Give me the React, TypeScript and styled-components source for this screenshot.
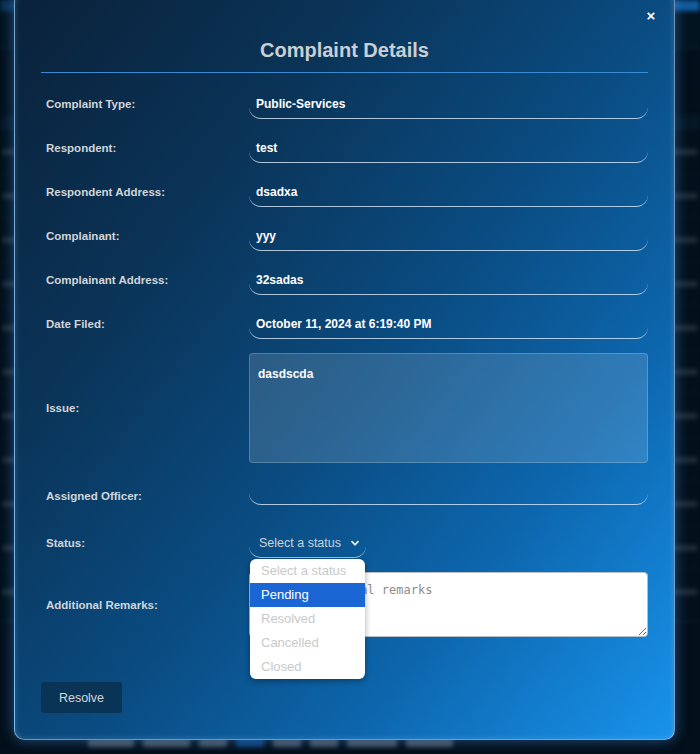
import React from "react";
import styled, { createGlobalStyle } from "styled-components";

const GlobalStyle = createGlobalStyle`
  html, body { margin: 0; padding: 0; background: #030f1a; overflow: hidden; }
  * { box-sizing: border-box; }
`;

const Page = styled.div`
  position: relative;
  width: 700px;
  height: 754px;
  overflow: hidden;
  background: #04121e;
  font-family: "Liberation Sans", Arial, sans-serif;
`;

/* ---------- blurred application behind the modal ---------- */
const AppBehind = styled.div`
  height: 100%;
  display: flex;
  flex-direction: column;
  filter: blur(2px);
`;

const TopBar = styled.div`
  height: 11px;
  background: linear-gradient(90deg, #0c3f69 0%, #1478cc 100%);
`;

const HeaderZone = styled.div`
  height: 38px;
  background: #051827;
  border-bottom: 1px solid #12293d;
`;

const TableArea = styled.div`
  margin-top: 66px;
  display: flex;
  flex-direction: column;
  background: #04131e;
  border-top: 14px solid #071c2c;
  border-bottom: 1px solid #1a2f42;
  padding-bottom: 8px;
`;

const TableRow = styled.div`
  height: 44px;
  display: flex;
  align-items: center;
  justify-content: space-between;
  padding: 0 2px;
  border-top: 1px solid #0a1d2c;
`;

const Ghost = styled.span<{ $w: number }>`
  display: block;
  width: ${(p) => p.$w}px;
  height: 6px;
  border-radius: 3px;
  background: #2b3946;
`;

const Pager = styled.div`
  margin-top: auto;
  height: 16px;
  display: flex;
  gap: 9px;
  padding-left: 88px;
  align-items: flex-start;
`;

const PagerPill = styled.span<{ $w: number; $active?: boolean }>`
  display: block;
  width: ${(p) => p.$w}px;
  height: 9px;
  border-radius: 2px;
  background: ${(p) => (p.$active ? "#0f4f94" : "#5b6670")};
`;

/* ---------- modal ---------- */
const Overlay = styled.div`
  position: absolute;
  inset: 0;
  background: rgba(0, 6, 14, 0.25);
`;

const Modal = styled.div`
  position: absolute;
  left: 14px;
  top: -8px;
  width: 661px;
  height: 748px;
  border-radius: 10px;
  border: 1.5px solid rgba(190, 220, 255, 0.6);
  box-shadow: 0 0 14px rgba(70, 150, 240, 0.5), inset 0 0 6px rgba(160, 210, 255, 0.25);
  background: linear-gradient(
    128deg,
    #0a2139 0%,
    #0a3458 28%,
    #0a4b80 52%,
    #0d66ad 74%,
    #1893ec 100%
  );
  padding: 0 26px 0 26px;
  display: flex;
  flex-direction: column;
`;

const CloseButton = styled.button`
  position: absolute;
  top: 14px;
  right: 14px;
  width: 18px;
  height: 18px;
  padding: 0;
  border: none;
  background: transparent;
  color: #ffffff;
  font-family: "Liberation Sans", Arial, sans-serif;
  font-weight: 700;
  font-size: 15px;
  line-height: 18px;
  cursor: pointer;
`;

const Title = styled.h2`
  margin: 0;
  padding: 45px 0 10px;
  text-align: center;
  font-size: 20px;
  line-height: 24px;
  font-weight: 700;
  color: #cbcfd3;
  border-bottom: 1px solid #3b8bd3;
`;

const Form = styled.div`
  margin-top: 16px;
  display: flex;
  flex-direction: column;
  gap: 14px;
`;

const Row = styled.div<{ $extra?: number; $alignEnd?: boolean }>`
  display: grid;
  grid-template-columns: 208px 1fr;
  align-items: ${(p) => (p.$alignEnd ? "end" : "center")};
  margin-top: ${(p) => p.$extra ?? 0}px;
`;

const Label = styled.label<{ $lift?: number }>`
  padding-left: 5px;
  padding-bottom: ${(p) => p.$lift ?? 0}px;
  font-size: 11.5px;
  line-height: 14px;
  font-weight: 700;
  color: #d2d5d9;
`;

const LineInput = styled.div<{ $h?: number }>`
  height: ${(p) => p.$h ?? 30}px;
  display: flex;
  align-items: center;
  padding: 0 7px;
  border: none;
  border-bottom: 1px solid rgba(215, 232, 250, 0.8);
  border-radius: 12px;
  color: #ffffff;
  font-size: 12px;
  font-weight: 700;
`;

const IssueBox = styled.div`
  height: 110px;
  padding: 13px 8px;
  background: rgba(255, 255, 255, 0.14);
  border: 1px solid rgba(255, 255, 255, 0.2);
  border-radius: 4px;
  color: #ffffff;
  font-size: 12px;
  line-height: 14px;
  font-weight: 700;
`;

const SelectWrap = styled.div`
  position: relative;
  width: 117px;
`;

const SelectBox = styled.div`
  height: 30px;
  display: flex;
  align-items: center;
  justify-content: space-between;
  padding: 0 5px 0 10px;
  border-bottom: 1px solid rgba(215, 232, 250, 0.75);
  border-radius: 12px;
  color: #cdd2d7;
  font-size: 12.5px;
`;

const Chevron = styled.svg`
  width: 10px;
  height: 10px;
  margin-right: 1px;
`;

const OptionList = styled.ul`
  position: absolute;
  top: 31px;
  left: 1px;
  width: 115px;
  margin: 0;
  padding: 0;
  list-style: none;
  background: #ffffff;
  border-radius: 6px;
  box-shadow: 0 2px 6px rgba(0, 0, 0, 0.35);
  overflow: hidden;
  z-index: 2;
`;

const Option = styled.li<{ $selected?: boolean }>`
  height: 24px;
  line-height: 24px;
  padding-left: 11px;
  font-size: 13px;
  font-family: "Liberation Sans", Arial, sans-serif;
  color: ${(p) => (p.$selected ? "#ffffff" : "#c9c9c9")};
  background: ${(p) => (p.$selected ? "#1a66d5" : "transparent")};
`;

const RemarksArea = styled.textarea`
  display: block;
  width: 100%;
  height: 65px;
  padding: 10px 9px;
  background: #ffffff;
  border: 1px solid #b9bec4;
  border-radius: 4px;
  font-family: "DejaVu Sans Mono", "Liberation Mono", monospace;
  font-size: 12px;
  color: #222;
  resize: both;
  outline: none;
  &::placeholder { color: #8c8c8c; }
`;

const ResolveButton = styled.button`
  margin-top: 45px;
  align-self: flex-start;
  width: 81px;
  height: 31px;
  border: none;
  border-radius: 3px;
  background: #0a3456;
  color: #d3d6da;
  font-family: "Liberation Sans", Arial, sans-serif;
  font-size: 12.5px;
  cursor: pointer;
`;

const fields: [string, string][] = [
  ["Complaint Type:", "Public-Services"],
  ["Respondent:", "test"],
  ["Respondent Address:", "dsadxa"],
  ["Complainant:", "yyy"],
  ["Complainant Address:", "32sadas"],
  ["Date Filed:", "October 11, 2024 at 6:19:40 PM"],
];

const ghostRows = [
  [22, 30],
  [20, 34],
  [24, 28],
  [18, 32],
  [22, 30],
  [26, 26],
  [20, 34],
  [22, 28],
  [18, 30],
  [24, 32],
  [20, 26],
];

const statusOptions = ["Select a status", "Pending", "Resolved", "Cancelled", "Closed"];

export default function App() {
  return (
    <Page>
      <GlobalStyle />
      <AppBehind>
        <TopBar />
        <HeaderZone />
        <TableArea>
          {ghostRows.map(([a, b], i) => (
            <TableRow key={i}>
              <Ghost $w={a} />
              <Ghost $w={b} />
            </TableRow>
          ))}
        </TableArea>
        <Pager>
          <PagerPill $w={46} />
          <PagerPill $w={47} />
          <PagerPill $w={28} />
          <PagerPill $w={28} $active />
          <PagerPill $w={28} />
          <PagerPill $w={28} />
          <PagerPill $w={50} />
          <PagerPill $w={47} />
        </Pager>
      </AppBehind>

      <Overlay />
      <Modal>
        <CloseButton aria-label="Close">×</CloseButton>
        <Title>Complaint Details</Title>
        <Form>
          {fields.map(([label, value]) => (
            <Row key={label}>
              <Label>{label}</Label>
              <LineInput>{value}</LineInput>
            </Row>
          ))}
          <Row>
            <Label>Issue:</Label>
            <IssueBox>dasdscda</IssueBox>
          </Row>
          <Row $alignEnd>
            <Label $lift={2}>Assigned Officer:</Label>
            <LineInput $h={28} />
          </Row>
          <Row $extra={9}>
            <Label>Status:</Label>
            <SelectWrap>
              <SelectBox>
                <span>Select a status</span>
                <Chevron viewBox="0 0 10 10">
                  <path d="M1.5 3.2 L5 6.7 L8.5 3.2" fill="none" stroke="#e6eaee" strokeWidth="1.7" />
                </Chevron>
              </SelectBox>
              <OptionList>
                {statusOptions.map((o) => (
                  <Option key={o} $selected={o === "Pending"}>
                    {o}
                  </Option>
                ))}
              </OptionList>
            </SelectWrap>
          </Row>
          <Row>
            <Label>Additional Remarks:</Label>
            <RemarksArea placeholder="Enter additional remarks" />
          </Row>
        </Form>
        <ResolveButton>Resolve</ResolveButton>
      </Modal>
    </Page>
  );
}
